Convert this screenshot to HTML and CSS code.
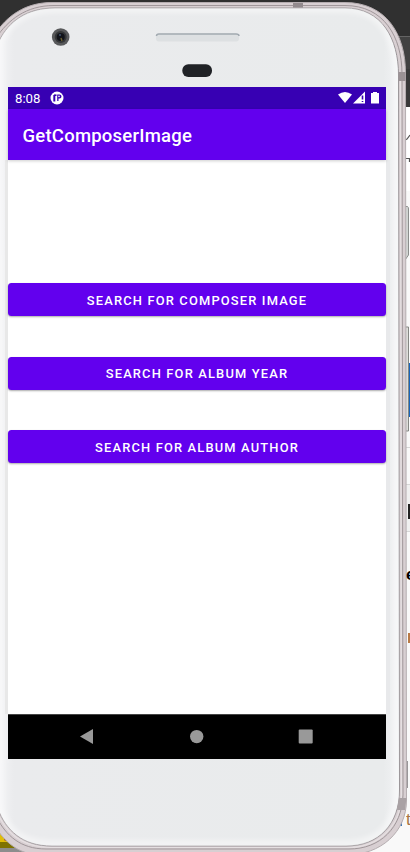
FILE: index.html
```html
<!DOCTYPE html>
<html lang="en">
<head>
<meta charset="utf-8">
<title>GetComposerImage</title>
<link rel="stylesheet" href="styles.css">
</head>
<body>
<div class="stage">
  <svg class="device" width="410" height="852" viewBox="0 0 410 852" aria-hidden="true">
    <defs>
      <linearGradient id="face" x1="0" x2="1" y1="0" y2="0">
        <stop offset="0" stop-color="#f4f4f6"/><stop offset=".04" stop-color="#eaebed"/>
        <stop offset=".96" stop-color="#e9ebec"/><stop offset="1" stop-color="#f2f3f5"/>
      </linearGradient>
      <filter id="soft" x="-10%" y="-10%" width="120%" height="120%"><feGaussianBlur stdDeviation="3"/></filter>
      <clipPath id="faceClip"><path d="M-1 41C9 21 27 8 55 8H345C382 8 398 39 398 75L399 790C399 824 379 846 346 846H52C22 846 6 830-2 809Z"/></clipPath>
    </defs>
    <rect width="410" height="852" fill="#f9f9f9"/>
    <rect width="410" height="107" fill="#303030"/>
    <path d="M396 36.5H410" stroke="#646464"/>
    <rect x="396" y="37" width="14" height="32" fill="#414141"/>
    <rect x="400" y="69" width="10" height="38" fill="#393939"/>
    <rect x="400" y="107" width="10" height="84" fill="#fff"/>
    <path d="M405 140L407 139L410 135M405 158.5H410M409.5 159V162" fill="none" stroke="#555" stroke-width="1.2"/>
    <path d="M404 206.500H407.500Q408.500 207 408.500 209V255L405 260" fill="#d2d5d3" stroke="#8b8e8c"/>
    <path d="M404 327H408.500V431H404Z" fill="#dededb" stroke="#858783"/>
    <rect x="409" y="363" width="1" height="54" fill="#1765bd"/>
    <path d="M405 447.500H410M405 484.500H410M405 531.500H410" stroke="#d6d6d6"/>
    <rect x="407" y="485" width="3" height="46" fill="#f0f0f0"/>
    <rect x="408" y="504" width="2" height="15" fill="#222"/>
    <rect x="408" y="633" width="2" height="10" fill="#b97a46"/>
    <rect x="406" y="761" width="2" height="27" fill="#9a9799"/>
    <rect x="400" y="817" width="2" height="9" fill="#3d78b8"/>
    <path d="M0 825H18V852H0Z" fill="#e0bd08"/><path d="M0 842H24V852H0Z" fill="#7e7200"/><path d="M0 848H36V852H0Z" fill="#8d8d8d"/>
    <circle cx="6" cy="839" r="2" fill="#a84b15"/>
    <path d="M-5 34C7 16 25 2.500 52 2.500H345C386 2.500 405.500 34 405.500 73L406.500 800C406.500 832 381 855 346 855H42C18 855 4 841-5 826Z" fill="#d8cfd2" stroke="#b5adb0"/>
    <path d="M-4 38C8 20 26 5.500 54 5.500H345C384 5.500 402 37 402 74L403 795C402 828 380 849 349 849H46C20 849 6 835-3 818" fill="none" stroke="#a0979a" stroke-width="1"/>
    <path d="M400.500 75L401.500 795C401 825 380 847.500 348 847.500H50C22 847 6 832-2 814" fill="none" stroke="#e5dfe1" stroke-width="1.200"/>
    <path d="M-1 41C9 21 27 8 55 8H345C382 8 398.500 39 398.500 75L399.500 790C399.500 824 379 846 346 846H52C22 846 6 830-2 809Z" fill="url(#face)" stroke="#9b9699" stroke-width="1"/>
    <g clip-path="url(#faceClip)"><path d="M0 41C10 21 27 9 55 9H345C382 9 397 39 397 75V790C397 824 379 844 346 844H52C22 844 6 830 0 809Z" fill="none" stroke="#fff" stroke-width="5" filter="url(#soft)" opacity=".7"/></g>
    <rect x="293" y="3" width="10" height="4.500" fill="#928a8d"/>
    <rect x="398.500" y="72" width="7" height="9" fill="#9b9295"/>
    <path d="M399 798L406.500 798L405 810L397 810Z" fill="#a9a1a4"/>
    <circle cx="60.700" cy="37" r="8.800" fill="#58595b"/><circle cx="60.700" cy="37" r="6" fill="#343638"/><circle cx="60.700" cy="37" r="4" fill="#111319"/><path d="M61 38L62 41" stroke="#685e31" stroke-width="1.500"/><circle cx="60" cy="35" r="1" fill="#42536e"/>
    <rect x="156" y="33.500" width="83" height="8" rx="3" fill="#dde0e2"/><path d="M156.500 36Q156.500 34 159 34H236Q239 34 239 36" fill="none" stroke="#a2aab1" stroke-width="1.500"/>
    <rect x="182.300" y="64.300" width="29.700" height="12.700" rx="6" fill="#202226"/>
    <rect x="5" y="160" width="3" height="554" fill="#e8e8e8"/>
    <rect x="386" y="160" width="4" height="554" fill="#e8e9eb"/>
  </svg>
  <div class="peek peek-bold" aria-hidden="true">e</div>
  <div class="peek peek-link" aria-hidden="true">t</div>
  <main class="screen">
    <header class="status">
      <span class="clock">8:08</span>
      <svg class="app-icon" width="14" height="14" viewBox="0 0 14 14"><circle cx="7" cy="7" r="6.500" fill="#fff"/><path d="M4.300 4V10.500" stroke="#3700b3" stroke-width="2"/><path d="M4 4.200H6.500" stroke="#3700b3" stroke-width="1.600"/><path d="M7.200 3.500H9.500A1.500 1.500 0 0 1 9.500 7.500H8.500V10H7.200Z" fill="#3700b3"/><circle cx="9" cy="5.400" r=".8" fill="#fff"/></svg>
      <svg class="signals" width="42" height="14" viewBox="0 0 42 14"><path d="M0 3.500Q7-1.500 14 3.500L7 12Z" fill="#fff"/><path d="M15 12.500L27 .5V12.500Z" fill="#fff"/><path d="M24.500 4.500V8.500M24.500 10V11" stroke="#3700b3" stroke-width="1.600"/><path d="M33 2H35V1H39V2H41V12.500H33Z" fill="#fff"/></svg>
    </header>
    <h1 class="title">GetComposerImage</h1>
    <section class="content">
      <button>Search for composer image</button>
      <button>Search for album year</button>
      <button>Search for album author</button>
    </section>
    <nav class="navigation">
      <svg width="378" height="44" viewBox="0 0 378 44" fill="#999"><path d="M72 21.500L85 14V29Z"/><circle cx="188.700" cy="21.600" r="6.700"/><rect x="290.700" y="14.500" width="14" height="14" rx="1"/></svg>
    </nav>
  </main>
</div>
</body>
</html>
```

FILE: styles.css
```css
* { box-sizing: border-box; }
body { margin: 0; overflow: hidden; }
.stage { position: relative; width: 410px; height: 852px; padding: 87px 24px 93px 8px; overflow: hidden; font-family: Roboto, sans-serif; }
.device { position: absolute; inset: 0; }
.screen { position: relative; display: flex; flex-direction: column; width: 378px; height: 672px; background: #fff; }
.status { display: flex; align-items: center; height: 22px; padding: 0 6px 0 7px; background: #3700b3; color: #fff; font-size: 13px; }
.clock { font-size: 13.2px; }
.app-icon { margin-left: 9.5px; }
.signals { margin-left: auto; }
.title { display: flex; align-items: center; height: 51px; margin: 0; padding: 2px 0 0 14.5px; background: #6200ee; color: #fff; font-size: 18.5px; font-weight: 500; letter-spacing: .23px; box-shadow: 0 1px 3px #0003; }
.content { display: flex; flex: 1; flex-direction: column; gap: 40.5px; padding-top: 123px; }
button { width: 100%; height: 33px; flex: none; margin: 0; padding: 1px 0 0; border: 0; border-radius: 3.5px; background: #6200ee; color: #fff; font: 500 12.9px Roboto, sans-serif; letter-spacing: 1.16px; text-transform: uppercase; box-shadow: 0 1px 2px #0005; }
.navigation { height: 45px; border-top: 1px solid #454545; background: #000; }
.navigation svg { display: block; }
.peek { position: absolute; width: 6px; overflow: hidden; line-height: 20px; }
.peek-bold { left: 406px; top: 565px; color: #000; font: 700 17px/20px "Liberation Sans", sans-serif; }
.peek-link { left: 406px; top: 810px; color: #a87545; font: 17px/20px "Liberation Sans", sans-serif; }
```
